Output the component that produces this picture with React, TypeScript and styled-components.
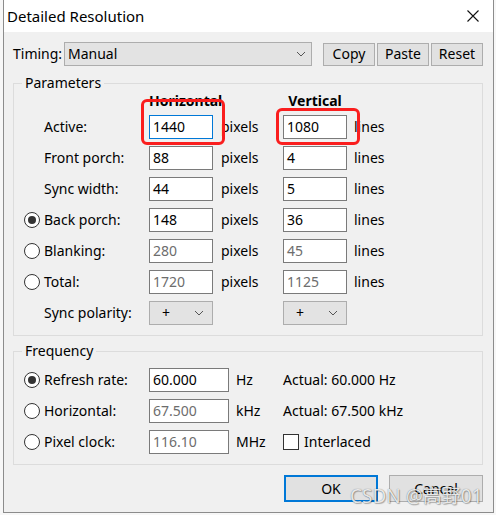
import React from 'react';
import styled, { createGlobalStyle, css } from 'styled-components';

const Global = createGlobalStyle`
  html, body { margin: 0; padding: 0; background: #f7f7f7; }
  body {
    font-family: "Noto Sans", "Segoe UI", "Noto Sans CJK SC", sans-serif;
    font-size: 14px;
    color: #000;
  }
  * { box-sizing: border-box; }
`;

const Page = styled.div`
  position: relative;
  width: 496px;
  height: 515px;
  overflow: hidden;
  padding-left: 3px;
  background: #f7f7f7;
`;

const Window = styled.div`
  width: 491px;
  height: 513px;
  border: 1px solid #8c8c8c;
  border-top: none;
  background: #f0f0f0;
  display: flex;
  flex-direction: column;
`;

const TitleBar = styled.div`
  height: 32px;
  flex: none;
  background: #fff;
  display: flex;
  align-items: center;
  justify-content: space-between;
  padding: 0 14px 0 3px;
`;

const Title = styled.span`
  font-size: 15px;
  line-height: 20px;
`;

const Body = styled.div`
  padding: 10px 10px 0 9px;
  display: flex;
  flex-direction: column;
`;

const TimingRow = styled.div`
  display: flex;
  align-items: center;
  height: 24px;
`;

const TimingLabel = styled.span`
  width: 51px;
  line-height: 20px;
`;

const Combo = styled.div<{ $w: number; $h?: number; $center?: boolean }>`
  width: ${(p) => p.$w}px;
  height: ${(p) => p.$h ?? 24}px;
  background: #e3e3e3;
  border: 1px solid #adadad;
  display: flex;
  align-items: center;
  justify-content: space-between;
  padding: ${(p) => (p.$center ? '0 8px 0 12px' : '0 5px 0 3px')};
  line-height: 20px;
`;

const ButtonGroup = styled.div`
  display: flex;
  gap: 2px;
  margin-left: 11px;
`;

const Button = styled.div<{ $w: number; $h: number; $primary?: boolean }>`
  width: ${(p) => p.$w}px;
  height: ${(p) => p.$h}px;
  background: #e1e1e1;
  border: 1px solid #adadad;
  display: flex;
  align-items: center;
  justify-content: center;
  line-height: 20px;
  ${(p) =>
    p.$primary &&
    css`
      border: 2px solid #0078d7;
    `}
`;

const Group = styled.fieldset<{ $mt: number }>`
  margin: ${(p) => p.$mt}px 0 0 0;
  padding: 0;
  border: 1px solid #dcdcdc;
  min-width: 0;
`;

const Legend = styled.legend`
  margin-left: 8px;
  padding: 0 3px;
  line-height: 20px;
  font-size: 14px;
`;

const Grid = styled.div<{ $cols: string; $rows: string; $pt: number }>`
  display: grid;
  grid-template-columns: ${(p) => p.$cols};
  grid-template-rows: ${(p) => p.$rows};
  row-gap: 7px;
  align-items: center;
  padding: ${(p) => p.$pt}px 0 10px 10px;
`;

const Header = styled.span<{ $col: number }>`
  grid-column: ${(p) => p.$col};
  font-weight: bold;
  text-align: center;
  line-height: 15px;
  white-space: nowrap;
`;

const RadioCell = styled.div`
  display: flex;
  align-items: center;
`;

const RadioCircle = styled.span<{ $on?: boolean }>`
  width: 16px;
  height: 16px;
  border-radius: 50%;
  border: 1px solid #333;
  background: #fff;
  display: flex;
  align-items: center;
  justify-content: center;
  &::after {
    content: '';
    width: 8px;
    height: 8px;
    border-radius: 50%;
    background: ${(p) => (p.$on ? '#333' : 'transparent')};
  }
`;

const Label = styled.span`
  line-height: 20px;
  white-space: nowrap;
`;

const Unit = styled.span<{ $pl: number }>`
  padding-left: ${(p) => p.$pl}px;
  line-height: 20px;
  white-space: nowrap;
`;

const Field = styled.div<{ $disabled?: boolean; $focus?: boolean }>`
  height: 24px;
  background: #fff;
  border: 1px solid ${(p) => (p.$focus ? '#0078d7' : '#7a7a7a')};
  color: ${(p) => (p.$disabled ? '#6d6d6d' : '#000')};
  padding-left: 3px;
  display: flex;
  align-items: center;
  line-height: 20px;
`;

const CheckRow = styled.div`
  display: flex;
  align-items: center;
  gap: 5px;
`;

const CheckBox = styled.span`
  width: 16px;
  height: 16px;
  border: 1px solid #333;
  background: #fff;
`;

const Footer = styled.div`
  display: flex;
  justify-content: flex-end;
  gap: 11px;
  margin-top: 10px;
`;

const Highlight = styled.div<{ $x: number; $y: number; $w: number; $h: number }>`
  position: absolute;
  left: ${(p) => p.$x}px;
  top: ${(p) => p.$y}px;
  width: ${(p) => p.$w}px;
  height: ${(p) => p.$h}px;
  border: 3px solid #fa1e1e;
  border-radius: 6px;
  pointer-events: none;
`;

const Watermark = styled.div`
  position: absolute;
  left: 350px;
  top: 484px;
  font-family: "Noto Sans", "Noto Sans CJK SC", sans-serif;
  font-size: 19px;
  line-height: 24px;
  color: rgba(255, 255, 255, 0.85);
  text-shadow: 0 0 1px rgba(0, 0, 0, 0.55), 1px 1px 1px rgba(0, 0, 0, 0.25);
  white-space: nowrap;
  pointer-events: none;
`;

const Chevron = () => (
  <svg width="10" height="6" viewBox="0 0 10 6">
    <path d="M1 1 L5 5 L9 1" fill="none" stroke="#555" strokeWidth="1" />
  </svg>
);

const CloseIcon = () => (
  <svg width="12" height="12" viewBox="0 0 12 12">
    <path d="M0.5 0.5 L11.5 11.5 M11.5 0.5 L0.5 11.5" stroke="#111" strokeWidth="1.1" fill="none" />
  </svg>
);

type Row = {
  radio?: boolean;
  on?: boolean;
  label: string;
  h?: string;
  v?: string;
  disabled?: boolean;
  combo?: boolean;
};

const paramRows: Row[] = [
  { label: 'Active:', h: '1440', v: '1080' },
  { label: 'Front porch:', h: '88', v: '4' },
  { label: 'Sync width:', h: '44', v: '5' },
  { radio: true, on: true, label: 'Back porch:', h: '148', v: '36' },
  { radio: true, label: 'Blanking:', h: '280', v: '45', disabled: true },
  { radio: true, label: 'Total:', h: '1720', v: '1125', disabled: true },
  { label: 'Sync polarity:', combo: true },
];

const paramCols = '20px 105px 64px 70px 64px 1fr';
const freqCols = '20px 105px 80px 54px 1fr';

export default function App() {
  return (
    <Page>
      <Global />
      <Window>
        <TitleBar>
          <Title>Detailed Resolution</Title>
          <CloseIcon />
        </TitleBar>
        <Body>
          <TimingRow>
            <TimingLabel>Timing:</TimingLabel>
            <Combo $w={248}>
              <span>Manual</span>
              <Chevron />
            </Combo>
            <ButtonGroup>
              <Button $w={52} $h={23}>Copy</Button>
              <Button $w={52} $h={23}>Paste</Button>
              <Button $w={52} $h={23}>Reset</Button>
            </ButtonGroup>
          </TimingRow>

          <Group $mt={7}>
            <Legend>Parameters</Legend>
            <Grid $cols={paramCols} $rows="15px repeat(7, 24px)" $pt={0}>
              <Header $col={3}>Horizontal</Header>
              <Header $col={5}>Vertical</Header>
              {paramRows.map((r, i) => (
                <React.Fragment key={r.label}>
                  <RadioCell style={{ gridColumn: 1 }}>{r.radio && <RadioCircle $on={r.on} />}</RadioCell>
                  <Label>{r.label}</Label>
                  {r.combo ? (
                    <>
                      <Combo $w={64} $center>
                        <span>+</span>
                        <Chevron />
                      </Combo>
                      <span />
                      <Combo $w={64} $center>
                        <span>+</span>
                        <Chevron />
                      </Combo>
                      <span />
                    </>
                  ) : (
                    <>
                      <Field $disabled={r.disabled} $focus={i === 0}>{r.h}</Field>
                      <Unit $pl={8}>pixels</Unit>
                      <Field $disabled={r.disabled}>{r.v}</Field>
                      <Unit $pl={7}>lines</Unit>
                    </>
                  )}
                </React.Fragment>
              ))}
            </Grid>
          </Group>

          <Group $mt={5}>
            <Legend>Frequency</Legend>
            <Grid $cols={freqCols} $rows="repeat(3, 24px)" $pt={7}>
              <RadioCell><RadioCircle $on /></RadioCell>
              <Label>Refresh rate:</Label>
              <Field>60.000</Field>
              <Unit $pl={7}>Hz</Unit>
              <Label>Actual: 60.000 Hz</Label>

              <RadioCell><RadioCircle /></RadioCell>
              <Label>Horizontal:</Label>
              <Field $disabled>67.500</Field>
              <Unit $pl={7}>kHz</Unit>
              <Label>Actual: 67.500 kHz</Label>

              <RadioCell><RadioCircle /></RadioCell>
              <Label>Pixel clock:</Label>
              <Field $disabled>116.10</Field>
              <Unit $pl={7}>MHz</Unit>
              <CheckRow>
                <CheckBox />
                <Label>Interlaced</Label>
              </CheckRow>
            </Grid>
          </Group>

          <Footer>
            <Button $w={94} $h={27} $primary>OK</Button>
            <Button $w={94} $h={27}>Cancel</Button>
          </Footer>
        </Body>
      </Window>
      <Highlight $x={141} $y={99} $w={84} $h={46} />
      <Highlight $x={276} $y={108} $w={84} $h={37} />
      <Watermark>CSDN @高野01</Watermark>
    </Page>
  );
}
